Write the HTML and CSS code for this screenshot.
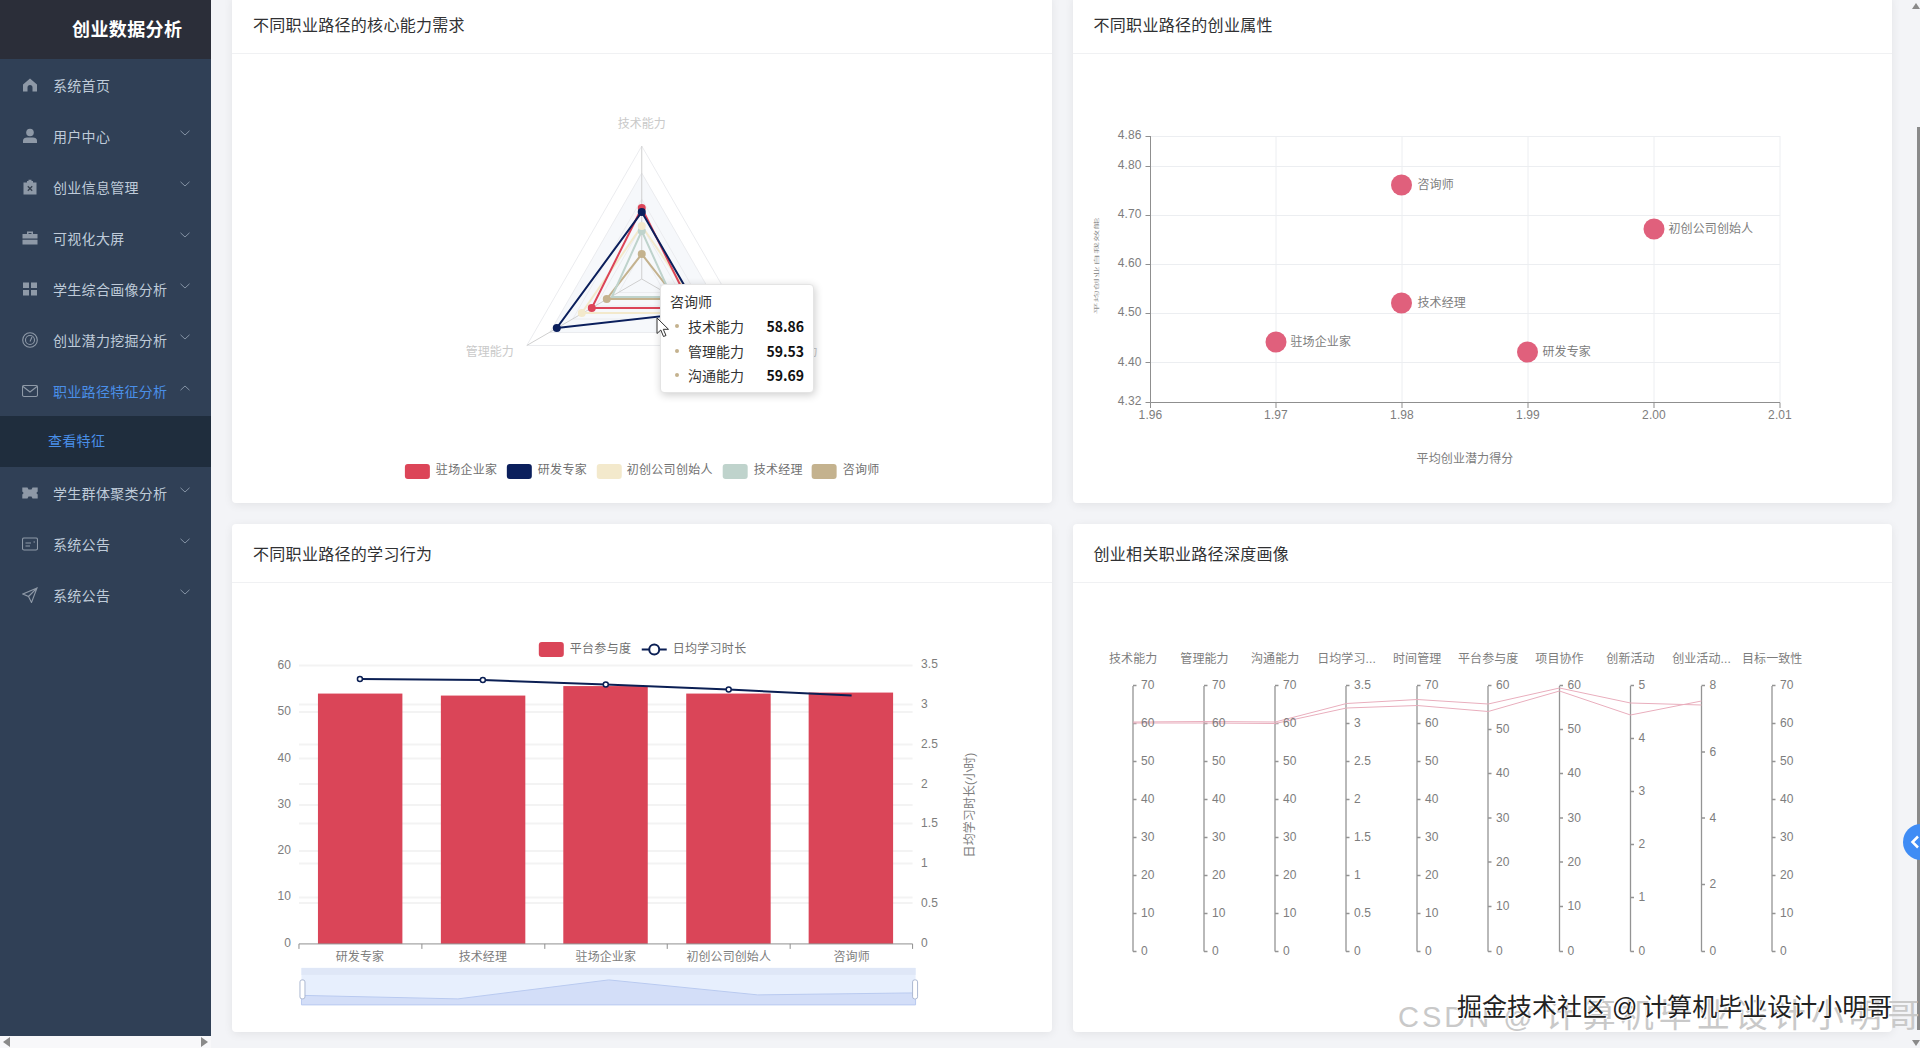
FILE: index.html
```html
<!DOCTYPE html>
<html lang="zh-CN">
<head>
    <meta charset="UTF-8">
    <meta name="viewport" content="width=device-width, initial-scale=1.0">
    <title>创业数据分析</title>
    <link rel="stylesheet" href="styles.css">
</head>
<body>
    <div class="layout">
        <aside class="sidebar">
            <div class="side-inner">
                <div class="logo">创业数据分析</div>
                <ul class="menu">
                    <li class="menu-item">
                        <svg class="icon" viewBox="0 0 16 16"><path class="solid" d="M8 1.500 15 7.500V14.500H10.500V10.500A2.500 2.500 0 0 0 5.500 10.500V14.500H1V7.500Z"/></svg>
                        <span>系统首页</span>
                    </li>
                    <li class="menu-item">
                        <svg class="icon" viewBox="0 0 16 16"><circle class="solid" cx="8" cy="4.500" r="3.800"/><path class="solid" d="M1 15V12.500C1 10.500 3 9.500 5 9.500H11C13 9.500 15 10.500 15 12.500V15Z"/></svg>
                        <span>用户中心</span>
                        <svg class="arrow" viewBox="0 0 10 6"><path d="M.5.800 5 5 9.500.800"/></svg>
                    </li>
                    <li class="menu-item">
                        <svg class="icon" viewBox="0 0 16 16"><path class="solid" d="M5 2H6.500V.800H9.500V2H11V3.500H14.500V15.500H1.500V3.500H5Z"/><path class="cut" d="M5.800 7.300 10.200 11.700M10.200 7.300 5.800 11.700"/></svg>
                        <span>创业信息管理</span>
                        <svg class="arrow" viewBox="0 0 10 6"><path d="M.5.800 5 5 9.500.800"/></svg>
                    </li>
                    <li class="menu-item">
                        <svg class="icon" viewBox="0 0 16 16"><path class="solid" d="M5 4V1.500H11V4H15.500V8.500H.5V4ZM6.500 4H9.500V3H6.500ZM.5 9.700H15.500V14.500H.5Z"/></svg>
                        <span>可视化大屏</span>
                        <svg class="arrow" viewBox="0 0 10 6"><path d="M.5.800 5 5 9.500.800"/></svg>
                    </li>
                    <li class="menu-item">
                        <svg class="icon" viewBox="0 0 16 16"><path class="solid" d="M1 1.500H7V7H1ZM9 1.500H15V7H9ZM1 9H7V14.500H1ZM9 9H15V14.500H9Z"/></svg>
                        <span>学生综合画像分析</span>
                        <svg class="arrow" viewBox="0 0 10 6"><path d="M.5.800 5 5 9.500.800"/></svg>
                    </li>
                    <li class="menu-item">
                        <svg class="icon" viewBox="0 0 16 16"><circle class="line" cx="8" cy="8" r="7.300"/><circle class="line" cx="8" cy="8" r="4.500"/><path class="line" d="M8 9.500 10 5"/></svg>
                        <span>创业潜力挖掘分析</span>
                        <svg class="arrow" viewBox="0 0 10 6"><path d="M.5.800 5 5 9.500.800"/></svg>
                    </li>
                    <li class="menu-item active">
                        <svg class="icon" viewBox="0 0 16 16"><rect class="line" x=".5" y="2.500" width="15" height="11" rx="1.500"/><path class="line" d="M1 3.500 8 9 15 3.500"/></svg>
                        <span>职业路径特征分析</span>
                        <svg class="arrow" viewBox="0 0 10 6"><path d="M.5 5.200 5 1 9.500 5.200"/></svg>
                    </li>
                    <li class="sub-item">查看特征</li>
                    <li class="menu-item">
                        <svg class="icon" viewBox="0 0 16 16"><path class="solid" d="M.3 2.500H5.500L6.500 4.500H9.500L10.500 2.500H15.700V6.500L14.300 8 15.700 9.500V13.500H10.500L9.500 11.500H6.500L5.500 13.500H.3V9.500L1.700 8 .3 6.500Z"/></svg>
                        <span>学生群体聚类分析</span>
                        <svg class="arrow" viewBox="0 0 10 6"><path d="M.5.800 5 5 9.500.800"/></svg>
                    </li>
                    <li class="menu-item">
                        <svg class="icon" viewBox="0 0 16 16"><rect class="line" x=".5" y="2" width="15" height="12" rx="1.500"/><path class="line" d="M3.500 7H9M3.500 10H8M11.500 6H13"/></svg>
                        <span>系统公告</span>
                        <svg class="arrow" viewBox="0 0 10 6"><path d="M.5.800 5 5 9.500.800"/></svg>
                    </li>
                    <li class="menu-item">
                        <svg class="icon" viewBox="0 0 16 16"><path class="line" d="M15 1 1 7 6.500 9.500 9.500 15.500ZM6.500 9.500 15 1"/></svg>
                        <span>系统公告</span>
                        <svg class="arrow" viewBox="0 0 10 6"><path d="M.5.800 5 5 9.500.800"/></svg>
                    </li>
                </ul>
            </div>
            <div class="side-scroll"><i class="tri-left"></i><i class="tri-right"></i></div>
        </aside>

        <main class="main">
            <div class="grid">
                <section class="card">
                    <div class="card-head">不同职业路径的核心能力需求</div>
                    <div class="chart-wrap">
                        <svg class="chart" viewBox="232 54 820 449">
                            <path class="radar-band" d="M642 173 734 332H550Z"/>
                            <path class="radar-ring" d="M642 146 757 345.500H527Z"/>
                            <path class="radar-ring" d="M642 173 734 332.500H550Z"/>
                            <path class="radar-ring" d="M642 199 711 319H573Z"/>
                            <path class="radar-ring" d="M642 226 688 306H596Z"/>
                            <path class="radar-ring" d="M642 252 665 292.500H619Z"/>
                            <path class="radar-axis" d="M642 146V279M527 345.500 642 279 757 345.500"/>

                            <path class="s-tan" d="M642 254 677 299H607Z"/>
                            <path class="s-teal" d="M642 231 672 297H612Z"/>
                            <path class="s-cream" d="M642 226 702 313H582Z"/>
                            <path class="s-red" d="M642 208 692 308H592Z"/>
                            <path class="s-navy" d="M642 212 700 312 557 328Z"/>
                            <circle class="d-teal" cx="642" cy="231" r="4"/>
                            <circle class="d-cream" cx="642" cy="226" r="4"/>
                            <circle class="d-cream" cx="582" cy="313" r="4"/>
                            <circle class="d-tan" cx="642" cy="254" r="4"/>
                            <circle class="d-tan" cx="607" cy="299" r="4"/>
                            <circle class="d-red" cx="642" cy="208" r="4"/>
                            <circle class="d-red" cx="592" cy="308" r="4"/>
                            <circle class="d-navy" cx="642" cy="212" r="4"/>
                            <circle class="d-navy" cx="557" cy="328" r="4"/>

                            <text class="radar-name" x="642" y="128" text-anchor="middle">技术能力</text>
                            <text class="radar-name" x="490" y="356" text-anchor="middle">管理能力</text>
                            <text class="radar-name" x="794" y="356" text-anchor="middle">沟通能力</text>

                            <rect x="405" y="464" width="25" height="15" rx="3" class="d-red"/>
                            <text class="legend" x="436" y="474">驻场企业家</text>
                            <rect x="507" y="464" width="25" height="15" rx="3" class="d-navy"/>
                            <text class="legend" x="538" y="474">研发专家</text>
                            <rect x="597" y="464" width="25" height="15" rx="3" class="d-cream"/>
                            <text class="legend" x="627" y="474">初创公司创始人</text>
                            <rect x="723" y="464" width="25" height="15" rx="3" class="d-teal"/>
                            <text class="legend" x="754" y="474">技术经理</text>
                            <rect x="812" y="464" width="25" height="15" rx="3" class="d-tan"/>
                            <text class="legend" x="843" y="474">咨询师</text>
                        </svg>
                        <div class="tooltip">
                            <div class="tip-title">咨询师</div>
                            <div class="tip-row"><i></i><span>技术能力</span><b>58.86</b></div>
                            <div class="tip-row"><i></i><span>管理能力</span><b>59.53</b></div>
                            <div class="tip-row"><i></i><span>沟通能力</span><b>59.69</b></div>
                        </div>
                        <svg class="cursor" viewBox="0 0 14 21"><path d="M1 1V16.500L4.800 13 7.500 19.500 10 18.500 7.300 12.300H12.500Z"/></svg>
                    </div>
                </section>

                <section class="card">
                    <div class="card-head">不同职业路径的创业属性</div>
                    <div class="chart-wrap">
                        <svg class="chart" viewBox="1072.500 54 819.500 449">
                            <path class="grid-thin" d="M1150 136.500H1779.500M1150 166.500H1779.500M1150 215.500H1779.500M1150 264.500H1779.500M1150 313.500H1779.500M1150 362.500H1779.500"/>
                            <path class="grid-thin" d="M1275.500 136V402M1401.500 136V402M1527.500 136V402M1653.500 136V402M1779.500 136V402"/>
                            <path class="axis" d="M1145 136.500H1150M1145 166.500H1150M1145 215.500H1150M1145 264.500H1150M1145 313.500H1150M1145 362.500H1150M1145 402.500H1150M1150 136V402.500H1779.500M1150 402.500V408M1275.500 402.500V408M1401.500 402.500V408M1527.500 402.500V408M1653.500 402.500V408M1779.500 402.500V408"/>

                            <g class="tick" text-anchor="end">
                                <text x="1141" y="139">4.86</text>
                                <text x="1141" y="169">4.80</text>
                                <text x="1141" y="218">4.70</text>
                                <text x="1141" y="267">4.60</text>
                                <text x="1141" y="316">4.50</text>
                                <text x="1141" y="366">4.40</text>
                                <text x="1141" y="405">4.32</text>
                            </g>
                            <g class="tick" text-anchor="middle">
                                <text x="1150" y="419">1.96</text>
                                <text x="1275.500" y="419">1.97</text>
                                <text x="1401.500" y="419">1.98</text>
                                <text x="1527.500" y="419">1.99</text>
                                <text x="1653.500" y="419">2.00</text>
                                <text x="1779.500" y="419">2.01</text>
                            </g>
                            <circle class="dot" cx="1401" cy="185" r="10.500"/>
                            <circle class="dot" cx="1653.500" cy="229" r="10.500"/>
                            <circle class="dot" cx="1401" cy="303" r="10.500"/>
                            <circle class="dot" cx="1275.500" cy="342" r="10.500"/>
                            <circle class="dot" cx="1527" cy="352" r="10.500"/>
                            <text class="tick" x="1417" y="189">咨询师</text>
                            <text class="tick" x="1668" y="233">初创公司创始人</text>
                            <text class="tick" x="1417" y="307">技术经理</text>
                            <text class="tick" x="1290" y="346">驻场企业家</text>
                            <text class="tick" x="1542" y="356">研发专家</text>
                            <text class="tick" x="1464.500" y="463" text-anchor="middle">平均创业潜力得分</text>
                            <text class="tick squeezed" transform="translate(1097 266) rotate(-90) scale(1 .35)" text-anchor="middle">平均创业自我效能</text>
                        </svg>
                    </div>
                </section>

                <section class="card">
                    <div class="card-head">不同职业路径的学习行为</div>
                    <div class="chart-wrap">
                        <svg class="chart" viewBox="232 583 820 449">
                            <path class="grid-wide" d="M299 665.500H913M299 712H913M299 758.500H913M299 805H913M299 851H913M299 897.500H913"/>
                            <path class="grid-wide" d="M299 704.500H913M299 744.500H913M299 784H913M299 823.500H913M299 863.500H913M299 903H913"/>
                            <rect class="bar" x="318" y="693.500" width="84.500" height="250.500"/>
                            <rect class="bar" x="441" y="695.500" width="84.500" height="248.500"/>
                            <rect class="bar" x="563.500" y="686" width="84.500" height="258"/>
                            <rect class="bar" x="686.500" y="693.500" width="84.500" height="250.500"/>
                            <rect class="bar" x="809" y="692.500" width="84.500" height="251.500"/>
                            <path class="axis" d="M299 944H913M299 944V949M422 944V949M545 944V949M667.500 944V949M790.500 944V949M913 944V949"/>
                            <path class="trend" d="M360 679 483 680 606 684.500 729 689.500 852 695.500"/>
                            <circle class="trend-dot" cx="360" cy="679" r="2.500"/>
                            <circle class="trend-dot" cx="483" cy="680" r="2.500"/>
                            <circle class="trend-dot" cx="606" cy="684.500" r="2.500"/>
                            <circle class="trend-dot" cx="729" cy="689.500" r="2.500"/>

                            <rect class="bar" x="539" y="642" width="25" height="15" rx="3"/>
                            <text class="legend" x="570" y="653">平台参与度</text>
                            <path class="trend" d="M642 649.500H667"/>
                            <circle class="trend-dot big" cx="654.500" cy="649.500" r="5"/>
                            <text class="legend" x="673" y="653">日均学习时长</text>

                            <g class="tick" text-anchor="end">
                                <text x="291" y="669">60</text>
                                <text x="291" y="715">50</text>
                                <text x="291" y="762">40</text>
                                <text x="291" y="808">30</text>
                                <text x="291" y="854">20</text>
                                <text x="291" y="900">10</text>
                                <text x="291" y="947">0</text>
                            </g>
                            <g class="tick">
                                <text x="921.500" y="668">3.5</text>
                                <text x="921.500" y="708">3</text>
                                <text x="921.500" y="748">2.5</text>
                                <text x="921.500" y="788">2</text>
                                <text x="921.500" y="827">1.5</text>
                                <text x="921.500" y="867">1</text>
                                <text x="921.500" y="907">0.5</text>
                                <text x="921.500" y="947">0</text>
                            </g>
                            <g class="tick" text-anchor="middle">
                                <text x="360" y="961">研发专家</text>
                                <text x="483" y="961">技术经理</text>
                                <text x="606" y="961">驻场企业家</text>
                                <text x="729" y="961">初创公司创始人</text>
                                <text x="852" y="961">咨询师</text>
                            </g>
                            <text class="tick" transform="translate(974 805) rotate(-90)" text-anchor="middle">日均学习时长(小时)</text>

                            <rect class="zoom-bg" x="301.500" y="968" width="614.500" height="37"/>
                            <rect class="zoom-top" x="301.500" y="968" width="614.500" height="7"/>
                            <path class="zoom-area" d="M301.500 995.500 458 999 609 980 758 995 916 993V1005H301.500Z"/>
                            <rect class="zoom-handle" x="300" y="980" width="5" height="19" rx="2"/>
                            <rect class="zoom-handle" x="913" y="980" width="5" height="19" rx="2"/>
                        </svg>
                    </div>
                </section>

                <section class="card">
                    <div class="card-head">创业相关职业路径深度画像</div>
                    <div class="chart-wrap">
                        <svg class="chart" viewBox="1072.500 583 819.500 449">
                            <g class="tick" text-anchor="middle">
                                <text x="1132.700" y="663">技术能力</text>
                                <text x="1204" y="663">管理能力</text>
                                <text x="1274.700" y="663">沟通能力</text>
                                <text x="1346" y="663">日均学习...</text>
                                <text x="1416.700" y="663">时间管理</text>
                                <text x="1487.700" y="663">平台参与度</text>
                                <text x="1559" y="663">项目协作</text>
                                <text x="1630" y="663">创新活动</text>
                                <text x="1701" y="663">创业活动...</text>
                                <text x="1771.700" y="663">目标一致性</text>
                            </g>

                            <g class="para-axes">
                                <path class="axis" d="M1132.500 686V951.500M1136 685.500H1132.500M1136 723.500H1132.500M1136 761.500H1132.500M1136 799.500H1132.500M1136 837.500H1132.500M1136 875.500H1132.500M1136 913.500H1132.500M1136 951.500H1132.500"/>
                                <path class="axis" d="M1203.500 686V951.500M1207 685.500H1203.500M1207 723.500H1203.500M1207 761.500H1203.500M1207 799.500H1203.500M1207 837.500H1203.500M1207 875.500H1203.500M1207 913.500H1203.500M1207 951.500H1203.500"/>
                                <path class="axis" d="M1274.500 686V951.500M1278 685.500H1274.500M1278 723.500H1274.500M1278 761.500H1274.500M1278 799.500H1274.500M1278 837.500H1274.500M1278 875.500H1274.500M1278 913.500H1274.500M1278 951.500H1274.500"/>
                                <path class="axis" d="M1345.500 686V951.500M1349 685.500H1345.500M1349 723.500H1345.500M1349 761.500H1345.500M1349 799.500H1345.500M1349 837.500H1345.500M1349 875.500H1345.500M1349 913.500H1345.500M1349 951.500H1345.500"/>
                                <path class="axis" d="M1416.500 686V951.500M1420 685.500H1416.500M1420 723.500H1416.500M1420 761.500H1416.500M1420 799.500H1416.500M1420 837.500H1416.500M1420 875.500H1416.500M1420 913.500H1416.500M1420 951.500H1416.500"/>
                                <path class="axis" d="M1487.500 686V951.500M1491 685.500H1487.500M1491 729.500H1487.500M1491 773.500H1487.500M1491 818H1487.500M1491 862H1487.500M1491 906.500H1487.500M1491 951.500H1487.500"/>
                                <path class="axis" d="M1559 686V951.500M1562.500 685.500H1559M1562.500 729.500H1559M1562.500 773.500H1559M1562.500 818H1559M1562.500 862H1559M1562.500 906.500H1559M1562.500 951.500H1559"/>
                                <path class="axis" d="M1630 686V951.500M1633.500 685.500H1630M1633.500 738.500H1630M1633.500 791.500H1630M1633.500 844.500H1630M1633.500 897.500H1630M1633.500 951.500H1630"/>
                                <path class="axis" d="M1701 686V951.500M1704.500 685.500H1701M1704.500 752H1701M1704.500 818H1701M1704.500 884.500H1701M1704.500 951.500H1701"/>
                                <path class="axis" d="M1771.500 686V951.500M1775 685.500H1771.500M1775 723.500H1771.500M1775 761.500H1771.500M1775 799.500H1771.500M1775 837.500H1771.500M1775 875.500H1771.500M1775 913.500H1771.500M1775 951.500H1771.500"/>
                            </g>

                            <path class="para" d="M1132.700 722 1204 721.500 1274.700 722 1346 703.500 1416.700 699.500 1487.700 704 1559 688 1630 703 1701 705"/>
                            <path class="para" d="M1132.700 723 1204 723 1274.700 723.500 1346 708 1416.700 705.500 1487.700 711.500 1559 691 1630 715 1701 701"/>

                            <g class="tick">
                                <text x="1140.500" y="689">70</text><text x="1140.500" y="727">60</text><text x="1140.500" y="765">50</text><text x="1140.500" y="803">40</text><text x="1140.500" y="841">30</text><text x="1140.500" y="879">20</text><text x="1140.500" y="917">10</text><text x="1140.500" y="955">0</text>
                                <text x="1211.500" y="689">70</text><text x="1211.500" y="727">60</text><text x="1211.500" y="765">50</text><text x="1211.500" y="803">40</text><text x="1211.500" y="841">30</text><text x="1211.500" y="879">20</text><text x="1211.500" y="917">10</text><text x="1211.500" y="955">0</text>
                                <text x="1282.500" y="689">70</text><text x="1282.500" y="727">60</text><text x="1282.500" y="765">50</text><text x="1282.500" y="803">40</text><text x="1282.500" y="841">30</text><text x="1282.500" y="879">20</text><text x="1282.500" y="917">10</text><text x="1282.500" y="955">0</text>
                                <text x="1353.500" y="689">3.5</text><text x="1353.500" y="727">3</text><text x="1353.500" y="765">2.5</text><text x="1353.500" y="803">2</text><text x="1353.500" y="841">1.5</text><text x="1353.500" y="879">1</text><text x="1353.500" y="917">0.5</text><text x="1353.500" y="955">0</text>
                                <text x="1424.500" y="689">70</text><text x="1424.500" y="727">60</text><text x="1424.500" y="765">50</text><text x="1424.500" y="803">40</text><text x="1424.500" y="841">30</text><text x="1424.500" y="879">20</text><text x="1424.500" y="917">10</text><text x="1424.500" y="955">0</text>
                                <text x="1495.500" y="689">60</text><text x="1495.500" y="733">50</text><text x="1495.500" y="777">40</text><text x="1495.500" y="822">30</text><text x="1495.500" y="866">20</text><text x="1495.500" y="910">10</text><text x="1495.500" y="955">0</text>
                                <text x="1567" y="689">60</text><text x="1567" y="733">50</text><text x="1567" y="777">40</text><text x="1567" y="822">30</text><text x="1567" y="866">20</text><text x="1567" y="910">10</text><text x="1567" y="955">0</text>
                                <text x="1638" y="689">5</text><text x="1638" y="742">4</text><text x="1638" y="795">3</text><text x="1638" y="848">2</text><text x="1638" y="901">1</text><text x="1638" y="955">0</text>
                                <text x="1709" y="689">8</text><text x="1709" y="756">6</text><text x="1709" y="822">4</text><text x="1709" y="888">2</text><text x="1709" y="955">0</text>
                                <text x="1779.500" y="689">70</text><text x="1779.500" y="727">60</text><text x="1779.500" y="765">50</text><text x="1779.500" y="803">40</text><text x="1779.500" y="841">30</text><text x="1779.500" y="879">20</text><text x="1779.500" y="917">10</text><text x="1779.500" y="955">0</text>
                            </g>
                        </svg>
                    </div>
                </section>
            </div>
        </main>
    </div>

    <!-- things lying over the page: scrollbar, drawer tab, video captions -->
    <div class="v-scroll"><i class="tri-up"></i><div class="v-thumb"></div><i class="tri-down"></i></div>
    <div class="drawer-tab"><svg viewBox="0 0 10 14"><path d="M8 1.500 2.500 7 8 12.500"/></svg></div>
    <div class="mark-back"><span class="mark-latin">CSDN @</span><span class="mark-cjk">计算机毕业设计小明哥</span></div>
    <div class="mark-front">掘金技术社区 @ 计算机毕业设计小明哥</div>
</body>
</html>
```

FILE: styles.css
```css
* {
    margin: 0;
    padding: 0;
    box-sizing: border-box;
}

html, body {
    height: 100%;
    overflow: hidden;
}

body {
    font-family: "Liberation Sans", "Noto Sans CJK SC", sans-serif;
    background: #f3f4f7;
    color: #303133;
}

.layout {
    display: flex;
    height: 100vh;
}

/* sidebar */
.sidebar {
    width: 211px;
    flex: none;
    display: flex;
    flex-direction: column;
    background: #f8f8fa;
}

.side-inner {
    flex: 1;
    background: #304056;
}

.logo {
    height: 59px;
    background: #2b2e39;
    color: #fff;
    font-size: 18px;
    font-weight: 700;
    letter-spacing: .4px;
    line-height: 60px;
    padding-left: 72px;
}

.menu {
    list-style: none;
}

.menu-item {
    position: relative;
    display: flex;
    align-items: center;
    height: 51px;
    padding-left: 22px;
    font-size: 14px;
    letter-spacing: .3px;
    color: #bfcbd9;
}

.menu-item.active {
    color: #4a8fe8;
}

.sub-item {
    height: 51px;
    line-height: 50px;
    padding-left: 48px;
    font-size: 14px;
    letter-spacing: .3px;
    background: #1f2d3d;
    color: #4a8fe8;
}

.icon {
    width: 16px;
    height: 16px;
    margin-right: 15px;
    flex: none;
}

.icon .solid {
    fill: #8e99a7;
}

.icon .line {
    fill: none;
    stroke: #8e99a7;
    stroke-width: 1.1;
}

.icon .cut {
    fill: none;
    stroke: #36414f;
    stroke-width: 1.3;
}

.arrow {
    position: absolute;
    left: 180px;
    top: 20px;
    width: 10px;
    height: 6px;
    fill: none;
    stroke: #8492a4;
    stroke-width: 1;
}

.side-scroll {
    height: 12px;
    display: flex;
    align-items: center;
    justify-content: space-between;
    padding: 0 3px;
}

.tri-left, .tri-right {
    border-top: 5px solid transparent;
    border-bottom: 5px solid transparent;
}

.tri-left {
    border-right: 7px solid #8a8a8a;
}

.tri-right {
    border-left: 7px solid #8a8a8a;
}

/* content */
.main {
    flex: 1;
    min-width: 0;
    padding: 0 28px 0 21px;
}

.grid {
    display: grid;
    grid-template-columns: 1fr 1fr;
    gap: 21px;
    margin-top: -5px;
}

.card {
    background: #fff;
    border-radius: 4px;
    box-shadow: 0 2px 10px rgba(0, 0, 0, 0.07);
    overflow: hidden;
}

.card-head {
    height: 59px;
    line-height: 61px;
    padding-left: 21px;
    font-size: 16px;
    letter-spacing: .3px;
    color: #303133;
    border-bottom: 1px solid #f0f1f3;
}

.chart-wrap {
    position: relative;
    height: 449px;
}

.chart {
    display: block;
    width: 100%;
    height: 449px;
}

/* svg text */
.tick {
    font-size: 12px;
    letter-spacing: .1px;
    fill: #7d7d7d;
}

.legend {
    font-size: 12px;
    letter-spacing: .3px;
    fill: #707070;
}

.radar-name {
    font-size: 12px;
    fill: #c9c9c9;
}

/* radar */
.radar-band {
    fill: #f6f8fb;
}

.radar-ring {
    fill: none;
    stroke: #ebecef;
    stroke-width: 1;
}

.radar-axis {
    fill: none;
    stroke: #cfcfcf;
    stroke-width: 1;
}

.s-red, .s-navy, .s-cream, .s-teal, .s-tan {
    fill: none;
    stroke-width: 2;
}

.s-red { stroke: #dc4558; }
.s-navy { stroke: #0b1f5c; }
.s-cream { stroke: #f3e9cc; }
.s-teal { stroke: #bfd3cc; }
.s-tan { stroke: #c4b28e; }

.d-red { fill: #dc4558; }
.d-navy { fill: #0b1f5c; }
.d-cream { fill: #f3e9cc; }
.d-teal { fill: #bfd3cc; }
.d-tan { fill: #c4b28e; }

.tooltip {
    position: absolute;
    left: 428px;
    top: 230px;
    width: 154px;
    height: 109px;
    padding: 5px 9px 0 9px;
    background: #fff;
    border: 1px solid #e4e4e4;
    border-radius: 4px;
    box-shadow: 1px 2px 8px rgba(0, 0, 0, 0.2);
    font-family: "Noto Sans CJK SC", sans-serif;
    font-size: 14px;
    color: #333;
}

.tip-title {
    line-height: 22px;
    margin-bottom: 2px;
}

.tip-row {
    display: flex;
    align-items: center;
    height: 24.500px;
}

.tip-row i {
    width: 4px;
    height: 4px;
    border-radius: 50%;
    background: #c4b28e;
    margin: 0 9px 0 5px;
}

.tip-row b {
    margin-left: auto;
    color: #111;
    font-weight: 700;
}

.cursor {
    position: absolute;
    left: 424px;
    top: 263px;
    width: 14px;
    height: 21px;
    fill: #fff;
    stroke: #333;
    stroke-width: 1;
}

/* cartesian bits */
.grid-thin {
    fill: none;
    stroke: #eceef1;
    stroke-width: 1;
}

.grid-wide {
    fill: none;
    stroke: #f3f3f3;
    stroke-width: 2;
}

.axis {
    fill: none;
    stroke: #8f8f8f;
    stroke-width: 1;
}

.para-axes .axis {
    stroke: #949494;
    stroke-width: 1.300;
}

.dot {
    fill: #e0607c;
}

.squeezed {
    fill: #8f8f8f;
}

.bar {
    fill: #da4558;
}

.trend {
    fill: none;
    stroke: #0b1f54;
    stroke-width: 2;
}

.trend-dot {
    fill: #fff;
    stroke: #0b1f54;
    stroke-width: 1.500;
}

.trend-dot.big {
    stroke-width: 2;
}

.zoom-bg {
    fill: #e7effd;
}

.zoom-top {
    fill: #dfe7f7;
}

.zoom-area {
    fill: #d3def8;
    stroke: #b9caf0;
    stroke-width: 1;
}

.zoom-handle {
    fill: #fff;
    stroke: #acb8d1;
    stroke-width: 1;
}

.para {
    fill: none;
    stroke: #e9aebd;
    stroke-width: 1;
}

/* overlays */
.v-scroll {
    position: absolute;
    top: 0;
    right: 0;
    bottom: 0;
    width: 5px;
    padding-left: 2px;
}

.tri-up, .tri-down {
    position: absolute;
    right: 0;
    border-left: 4px solid transparent;
    border-right: 4px solid transparent;
}

.tri-up {
    top: 3px;
    border-bottom: 6px solid #8a8a8a;
}

.tri-down {
    bottom: 2px;
    border-top: 6px solid #8a8a8a;
}

.v-thumb {
    position: absolute;
    top: 127px;
    bottom: 18px;
    left: 2px;
    right: 0;
    background: #8a8a8a;
}

.drawer-tab {
    position: absolute;
    left: 1903px;
    top: 824px;
    width: 36px;
    height: 36px;
    border-radius: 50%;
    background: #3f8cf5;
}

.drawer-tab svg {
    position: absolute;
    left: 7px;
    top: 11px;
    width: 10px;
    height: 14px;
    fill: none;
    stroke: #fff;
    stroke-width: 2.500;
}

.mark-back {
    position: absolute;
    left: 1398px;
    top: 994px;
    white-space: nowrap;
    line-height: 44px;
    color: #c9c9c9;
}

.mark-latin {
    font-size: 29px;
    letter-spacing: 3px;
}

.mark-cjk {
    font-size: 33px;
    letter-spacing: 5px;
    margin-left: 9px;
}

.mark-front {
    position: absolute;
    left: 1457px;
    top: 990px;
    white-space: nowrap;
    font-size: 25px;
    word-spacing: -2px;
    line-height: 34px;
    color: #222;
    text-shadow: 1px 1px 0 #fff, -1px 0 0 #fff;
}
```
